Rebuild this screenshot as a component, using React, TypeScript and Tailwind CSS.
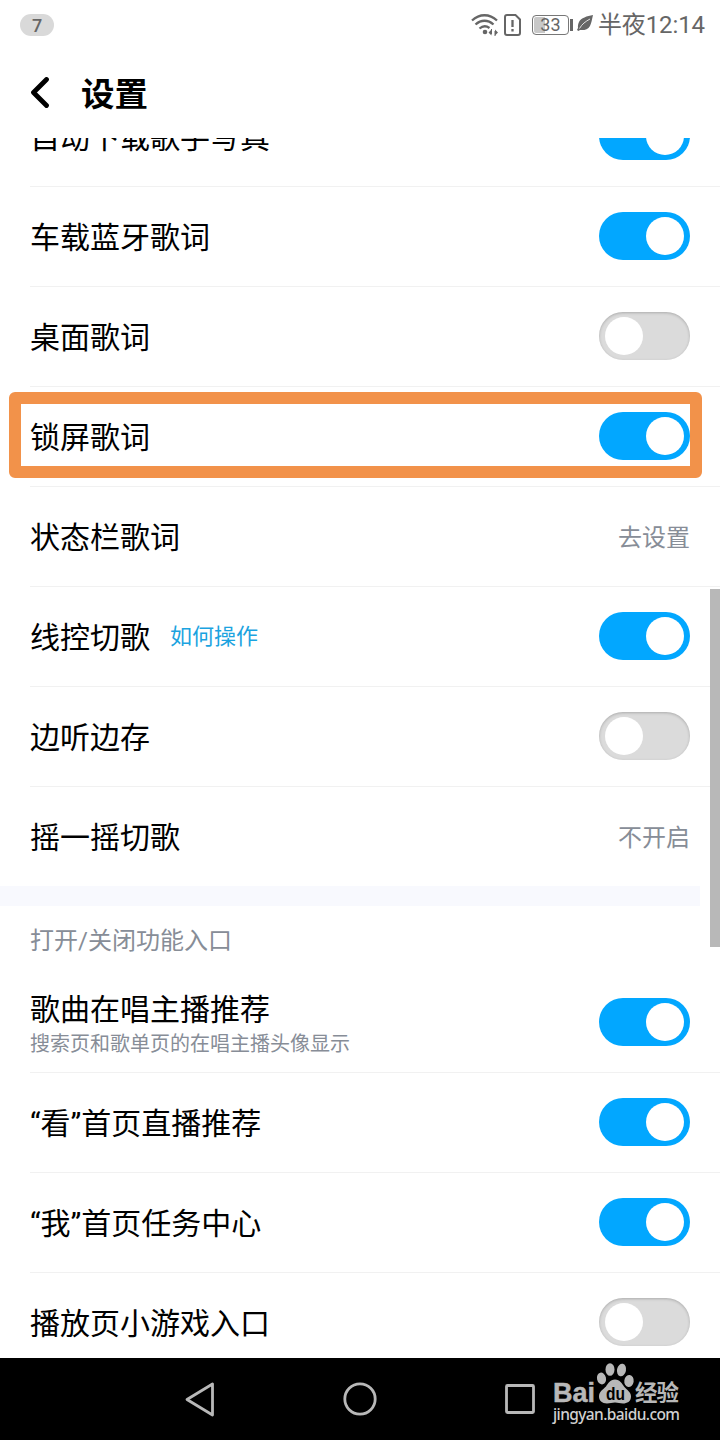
import { useState } from "react";
import clsx from "clsx";

type Item = {
  label: string;
  on?: boolean;
  value?: string;
  link?: string;
  desc?: string;
  highlight?: boolean;
  last?: boolean;
};

const playItems: Item[] = [
  { label: "自动下载歌手写真", on: true },
  { label: "车载蓝牙歌词", on: true },
  { label: "桌面歌词", on: false },
  { label: "锁屏歌词", on: true, highlight: true },
  { label: "状态栏歌词", value: "去设置" },
  { label: "线控切歌", on: true, link: "如何操作" },
  { label: "边听边存", on: false },
  { label: "摇一摇切歌", value: "不开启", last: true },
];

const entryItems: Item[] = [
  { label: "歌曲在唱主播推荐", on: true, desc: "搜索页和歌单页的在唱主播头像显示" },
  { label: "“看”首页直播推荐", on: true },
  { label: "“我”首页任务中心", on: true },
  { label: "播放页小游戏入口", on: false },
];

function Toggle({ initial }: { initial: boolean }) {
  const [on, setOn] = useState(initial);

  return (
    <button
      role="switch"
      aria-checked={on}
      onClick={() => setOn(!on)}
      className={clsx(
        "flex h-12 w-[91px] shrink-0 items-center rounded-full px-1.5",
        on
          ? "justify-end bg-[#02a7ff]"
          : "justify-start bg-[#dbdbdb] shadow-[inset_0_1px_3px_rgba(0,0,0,0.22)]"
      )}
    >
      <span className="size-[38px] rounded-full bg-white" />
    </button>
  );
}

function Row({ item }: { item: Item }) {
  return (
    <div className={clsx("relative pl-[30px]", item.last ? "h-[99px]" : "h-[100px]")}>
      <div
        className={clsx(
          "flex h-full items-center justify-between pr-[30px] pb-px",
          !item.last && "border-b border-[#f1f1f1]"
        )}
      >
        {item.desc ? (
          <div className="pt-[7px]">
            <div className="text-[30px] leading-9">{item.label}</div>
            <div className="text-[20px] leading-8 text-[#878d97]">{item.desc}</div>
          </div>
        ) : (
          <div className="flex items-center pt-[3px]">
            <span className="text-[30px] leading-10">{item.label}</span>
            {item.link && (
              <span className="ml-5 pb-0.5 text-[22px] leading-8 text-[#1ba3e0]">{item.link}</span>
            )}
          </div>
        )}
        {item.value ? (
          <span className="pt-[3px] text-[24px] leading-8 text-[#878d97]">{item.value}</span>
        ) : (
          <Toggle initial={!!item.on} />
        )}
      </div>
      {item.highlight && (
        <div className="pointer-events-none absolute top-[5px] left-[9px] h-[86px] w-[693px] rounded-md border-12 border-[#f2924a]" />
      )}
    </div>
  );
}

function StatusBar() {
  return (
    <div className="flex h-[50px] items-center justify-between pr-[15px] pl-5 text-[#666]">
      <div className="flex h-[22px] w-[34px] items-center justify-center rounded-full bg-[#d9d9d9] pt-px text-[18px] font-medium leading-none">
        7
      </div>
      <div className="flex items-center">
        <svg width="28" height="24" viewBox="0 0 28 24" fill="none" stroke="#666" strokeWidth="2.3">
          <path d="M1 7.5C8.5.5 18.5.5 26 7.5" />
          <path d="M4.5 11.5C10 6.5 17 6.500 22.5 11.5" />
          <path d="M8.5 15.5C12 12.500 15 12.500 18.5 15" />
          <circle cx="14" cy="19" r="2.3" fill="#666" stroke="none" />
          <path d="M17.500 19.500l3-3v6zM27 19.500l-3-3v6z" fill="#666" stroke="none" />
          <path d="M20.500 16v5M24 18v5" strokeWidth="1" />
        </svg>
        <svg className="ml-[5px]" width="17" height="22" viewBox="0 0 17 22" fill="none" stroke="#666" strokeWidth="2">
          <path d="M3 1h8.5L16 5.500V19a2 2 0 0 1-2 2H3a2 2 0 0 1-2-2V3a2 2 0 0 1 2-2z" />
          <path d="M8.5 6v7M8.5 15v2.500" strokeWidth="2.3" />
        </svg>
        <div className="ml-[11px] flex h-5 w-[37px] items-center justify-center rounded-[4px] border border-[#777] bg-white bg-linear-to-r from-[#c8c8c8] from-33% to-white to-33% text-[18px] leading-none shadow-[inset_0_0_0_1px_white]">
          33
        </div>
        <span className="ml-px h-3 w-[3px] bg-[#666]" />
        <svg className="-mt-1 ml-[4px]" width="17" height="18" viewBox="0 0 17 18">
          <path d="M16 1C10 2 4 4 2 8c-1 2-1.200 4-1 6l-1 2 1.500 1 1.500-1c4 .5 8-.5 10-4 1.500-3 2-7 3-11z" fill="#666" />
          <path d="M2.5 14.500C5 10 8.500 7.500 13 5" fill="none" stroke="white" strokeWidth=".8" />
        </svg>
        <span className="ml-[4px] text-[24px] leading-8 tracking-[-0.1px]">半夜12:14</span>
      </div>
    </div>
  );
}

function Watermark() {
  return (
    <div className="absolute top-[3px] left-[550px] text-[#b8b8b8]">
      <svg width="134" height="64" viewBox="0 0 134 64" fill="currentColor">
        <text x="3" y="40.5" fontSize="28" fontWeight="700" fontFamily="Liberation Sans" stroke="currentColor" strokeWidth=".5" textLength="42" lengthAdjust="spacingAndGlyphs">
          Bai
        </text>
        <ellipse cx="51.5" cy="17.5" rx="4.5" ry="6" transform="rotate(-12 51.5 17.5)" />
        <ellipse cx="60" cy="8.5" rx="4.5" ry="6.3" />
        <ellipse cx="71.5" cy="9" rx="4.5" ry="6.3" transform="rotate(12 71.5 9)" />
        <ellipse cx="79" cy="20" rx="4.7" ry="6" transform="rotate(8 79 20)" />
        <path d="M65 18.500c5 0 7 4 9 7 3 4 7 5 7 10 0 5-4 7-8 7-3 0-5-1-8-1s-5 1-8 1c-5 0-8-3-8-7 0-5 4-7 7-10 2-3 4-7 9-7z" />
        <text x="56" y="38.5" fontSize="18" fontWeight="700" fontFamily="Liberation Sans" fill="black" textLength="19" lengthAdjust="spacingAndGlyphs">
          du
        </text>
        <text x="85" y="39.5" fontSize="22.5" fontWeight="700" fontFamily="Noto Sans CJK SC" textLength="44">
          经验
        </text>
        <text x="3" y="58.5" fontSize="15.5" fontFamily="Noto Sans" fontWeight="500" fill="#d0d0d0" textLength="127">
          jingyan.baidu.com
        </text>
      </svg>
    </div>
  );
}

function NavBar() {
  return (
    <div className="relative flex h-[82px] items-center bg-black pl-[184px]">
      <svg width="352" height="36" viewBox="0 0 352 36" fill="none" stroke="#b8b8b8" strokeWidth="2.8" strokeLinejoin="round">
        <path d="M28.5 3v31L3 18.500z" />
        <circle cx="176" cy="18" r="15.2" />
        <rect x="322.5" y="4.5" width="27" height="27" rx="1" />
      </svg>
      <Watermark />
    </div>
  );
}

export default function App() {
  return (
    <div className="relative flex h-[1440px] w-[720px] flex-col overflow-hidden bg-white font-[Roboto,'Noto_Sans_CJK_SC',sans-serif] text-black">
      <StatusBar />
      <header className="flex h-[88px] items-center pl-[30px]">
        <svg width="20" height="34" viewBox="0 0 20 34" fill="none" stroke="black" strokeWidth="4.8" strokeLinecap="round" strokeLinejoin="round">
          <path d="M16.5 2.500L3.500 15.500l13 13" />
        </svg>
        <h1 className="ml-[31px] pt-px text-[33.5px] font-bold leading-10">设置</h1>
      </header>
      <main className="min-h-0 flex-1 overflow-hidden">
        <div className="-mt-[51px]">
          {playItems.map((item) => (
            <Row key={item.label} item={item} />
          ))}
          <div className="h-5 w-[700px] bg-[#f8f9fe]" />
          <div className="flex h-[67px] items-center pt-0.5 pl-[30px] text-[24px] text-[#878d97]">打开/关闭功能入口</div>
          {entryItems.map((item) => (
            <Row key={item.label} item={item} />
          ))}
        </div>
      </main>
      <NavBar />
      {/* scrollbar thumb */}
      <div className="absolute top-[589px] right-0 h-[358px] w-2.5 bg-[#b8b8b8]" />
    </div>
  );
}
